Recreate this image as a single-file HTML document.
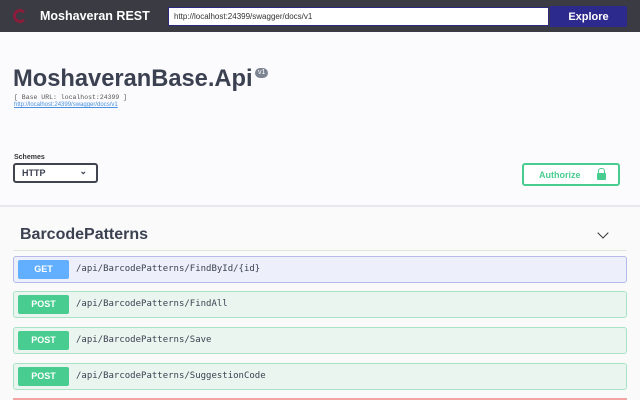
<!DOCTYPE html>
<html><head><style>
*{margin:0;padding:0;box-sizing:border-box}
html,body{width:640px;height:400px;overflow:hidden}
body{background:#fafafa;font-family:"Liberation Sans",sans-serif;position:relative}
.top{position:absolute;left:0;top:0;width:640px;height:32px;background:#3b3b43}
.logo{position:absolute;left:13px;top:9px;width:14px;height:14px;border:3px solid #8a1d3c;border-radius:50%;border-right-color:transparent}
.brand{position:absolute;left:40px;top:9px;color:#fff;font-weight:bold;font-size:12.5px}
.url{position:absolute;left:168px;top:7px;width:381px;height:19px;background:#fff;border:1px solid #2d2a7d;font-size:8px;padding:4px 5px;color:#333}
.exp{position:absolute;left:550px;top:6px;width:77px;height:21px;background:#2c2a8c;color:#fff;font-weight:bold;font-size:11px;text-align:center;line-height:21px;padding-top:1px}
.info{position:absolute;left:0;top:32px;width:640px;height:173px;background:#fbfbfd}
h1{position:absolute;left:13px;top:66px;font-size:23.7px;line-height:26px;color:#3b4151;font-weight:bold;white-space:nowrap}
.ver{position:absolute;left:255px;top:68px;background:#7d8492;color:#fff;font-size:7px;border-radius:5px;padding:1px 3px;line-height:8px}
.base{position:absolute;left:14px;top:94px;font-family:"Liberation Mono",monospace;font-size:6.5px;color:#555}
.lnk{position:absolute;left:14px;top:102px;font-size:6px;color:#4990e2;text-decoration:underline}
.sl{position:absolute;left:14px;top:154px;font-size:7px;color:#333;font-weight:bold}
.sel{position:absolute;left:13px;top:163px;width:85px;height:20px;border:2px solid #41444e;border-radius:3px;font-size:9px;font-weight:bold;padding:3px 7px;color:#3b4151;background:#fff}
.auth{position:absolute;left:522px;top:163px;width:98px;height:23px;border:2px solid #49cc90;border-radius:3px;color:#49cc90;font-size:9px;font-weight:bold;padding:5px 0 0 15px;background:#fff}
.lock{position:absolute;left:73px;top:8px;width:9px;height:7px;background:#49cc90;border-radius:1px}
.lock:before{content:"";position:absolute;left:1px;top:-5px;width:5px;height:5px;border:1.5px solid #49cc90;border-bottom:none;border-radius:3px 3px 0 0}
.line{position:absolute;left:0;top:205px;width:640px;height:2px;background:#e8e8ec}
.tag{position:absolute;left:20px;top:226px;font-size:16px;font-weight:bold;color:#3b4151}
.tl{position:absolute;left:13px;top:250px;width:614px;height:1px;background:#dfe8d8}
.chev{position:absolute;left:599px;top:229px;width:8px;height:8px;border-right:1.5px solid #333;border-bottom:1.5px solid #333;transform:rotate(45deg)}
.op{position:absolute;left:13px;width:614px;height:27px;border:1px solid;border-radius:3px}
.op b{position:absolute;left:4px;top:3px;width:51px;height:19px;border-radius:2px;color:#fff;font-size:9px;text-align:center;line-height:19px}
.op span{position:absolute;left:62px;top:7px;font-family:"DejaVu Sans Mono","Liberation Mono",monospace;font-size:9px;color:#3b4151}
.g{background:#edf0fa;border-color:#b6b9ea}.g b{background:#61affe}
.p{background:#eaf5ef;border-color:#a9e2c4}.p b{background:#49cc90}
</style></head><body>
<div class="top"><div class="logo"></div><div class="brand">Moshaveran REST</div><div class="url">http://localhost:24399/swagger/docs/v1</div><div class="exp">Explore</div></div>
<div class="info"></div>
<h1>MoshaveranBase.Api</h1><div class="ver">v1</div>
<div class="base">[ Base URL: localhost:24399 ]</div>
<div class="lnk">http://localhost:24399/swagger/docs/v1</div>
<div class="sl">Schemes</div>
<div class="sel">HTTP<span style="position:absolute;right:9px;top:1px;font-size:9px">⌄</span></div>
<div class="auth">Authorize<div class="lock"></div></div>
<div class="line"></div>
<div class="tag">BarcodePatterns</div><div class="chev"></div>
<div class="tl"></div>
<div class="op g" style="top:256px"><b>GET</b><span>/api/BarcodePatterns/FindById/{id}</span></div>
<div class="op p" style="top:291px"><b>POST</b><span>/api/BarcodePatterns/FindAll</span></div>
<div class="op p" style="top:327px"><b>POST</b><span>/api/BarcodePatterns/Save</span></div>
<div class="op p" style="top:363px"><b>POST</b><span>/api/BarcodePatterns/SuggestionCode</span></div>
<div style="position:absolute;left:13px;top:398px;width:614px;height:2px;background:#f2a3a3"></div>
</body></html>
